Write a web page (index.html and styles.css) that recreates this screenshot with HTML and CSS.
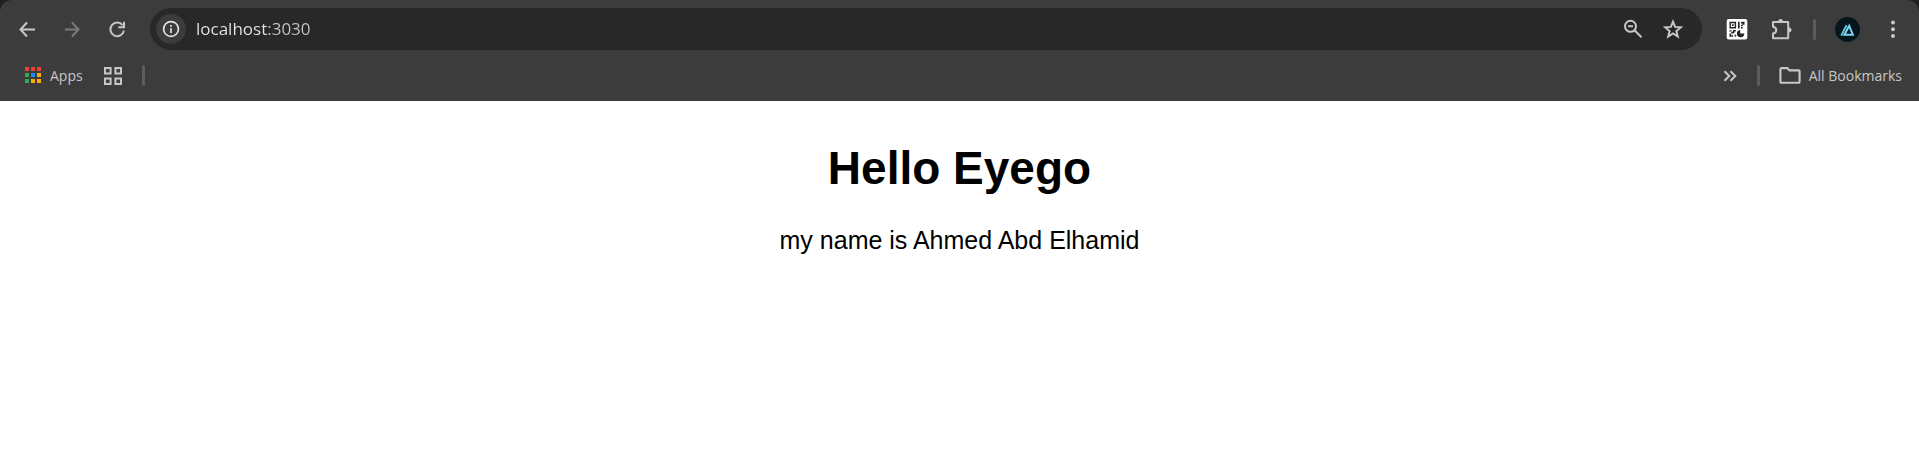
FILE: index.html
```html
<!DOCTYPE html>
<html lang="en">
<head>
<meta charset="utf-8">
<title>Hello Eyego</title>
<link rel="stylesheet" href="styles.css">
</head>
<body>
<div class="frame">
<header class="chrome">
  <div class="toolbar">
    <nav class="nav">
      <button class="nav-btn" aria-label="Back"><svg class="icon" viewBox="0 0 24 24"><path d="M20 12.5H6M12 5.5L5.5 12.5L12 19.5" class="line"/></svg></button>
      <button class="nav-btn dim" aria-label="Forward"><svg class="icon" viewBox="0 0 24 24"><path d="M5 12.5H19M12 5.5L18.5 12.5L12 19.5" class="line"/></svg></button>
      <button class="nav-btn" aria-label="Reload"><svg class="icon" viewBox="0 0 24 24"><path d="M17.6 8.2A6.8 6.8 0 1 0 18.9 13.6" class="line"/><path d="M19 4.8V10.2H13.3" class="line"/></svg></button>
    </nav>
    <form class="address">
      <button type="button" class="site-info" aria-label="Site information"><svg class="icon" viewBox="0 0 24 24"><circle cx="12" cy="12" r="7.4" class="line thin"/><path d="M12 11.2V16M12 8V9.8" class="line thin"/></svg></button>
      <input class="url" type="text" aria-label="Address" value="localhost:3030" spellcheck="false">
      <button type="button" class="addr-btn" aria-label="Zoom"><svg class="icon" viewBox="0 0 24 24"><circle cx="9.5" cy="9.3" r="5.5" class="line"/><path d="M13.5 13.3L20.5 20.3M7 9.3H12" class="line"/></svg></button>
      <button type="button" class="addr-btn" aria-label="Bookmark this page"><svg class="icon" viewBox="0 0 24 24"><path d="M12 4.6L14.1 9.9L19.8 10.3L15.4 14L16.8 19.6L12 16.5L7.2 19.6L8.6 14L4.2 10.3L9.9 9.9Z" class="line"/></svg></button>
    </form>
    <div class="actions">
      <button class="act" aria-label="QR code"><svg class="icon" viewBox="0 0 24 24">
        <rect x="1.7" y="2" width="20.6" height="20.6" rx="2" fill="#fff"/>
        <path d="M5.2 5.5h5.2v5.2h-5.2z" fill="none" stroke="#222" stroke-width="1.4"/>
        <path d="M7 7.3h1.7v1.7H7zM13 4.8h1.6v6.6H13zM16 5h1.6v1.5H16zM17.5 4.8h2v3h-2zM16 7.8h1.6v1.5H16zM16 10h1.6v1.4H16zM4.5 13.2h2v1.4h-2zM8 13h2.8v1.6H9.4v1.6H8zM6.3 14.8h1.7v1.6H6.3zM4.5 16.5h1.6v3.3H4.5zM6.3 18.3h1.8v1.5H6.3zM9.6 17.8h1.6v1.8H9.6z" fill="#222"/>
        <path d="M15.2 12.9v3.7h4.1a3.7 3.7 0 1 1-4.1-3.7z" fill="#222"/></svg></button>
      <button class="act" aria-label="Extensions"><svg class="icon" viewBox="0 0 24 24"><path d="M3 5H18.2V21.2H3V16.6C7.4 15.6 7.4 10.6 3 9.8Z" class="line" stroke-linejoin="round"/><path d="M8 4.8C8 1.2 13.2 1.2 13.2 4.8ZM18.5 10.2C22.6 10.6 22.6 15.2 18.5 15.6Z" fill="currentColor"/></svg></button>
      <span class="divider"></span>
      <button class="act" aria-label="Profile"><svg class="avatar" viewBox="0 0 25 25"><circle cx="12.5" cy="12.5" r="12.5" fill="#06161d"/><path d="M6.2 18.6L11.6 8.2" fill="none" stroke="#5dc5ea" stroke-width="2"/><path d="M14.2 8.8L17.8 17.7H9.4Z" fill="none" stroke="#7fd6f3" stroke-width="2"/></svg></button>
      <button class="act" aria-label="Menu"><svg class="icon" viewBox="0 0 24 24" fill="currentColor"><circle cx="12" cy="5.5" r="2"/><circle cx="12" cy="12.2" r="2"/><circle cx="12" cy="19" r="2"/></svg></button>
    </div>
  </div>
  <div class="bookmarks">
    <button class="bm"><svg class="apps" viewBox="0 0 17 17"><path fill="#ea4335" d="M0 0h4v4H0zM6 0h4v4H6zM12 0h4v4h-4z"/><path fill="#34a853" d="M0 6h4v4H0zM0 12h4v4H0z"/><path fill="#1a8cff" d="M6 6h4v4H6z"/><path fill="#fbae07" d="M12 6h4v4h-4zM6 12h4v4H6zM12 12h4v4h-4z"/></svg>Apps</button>
    <button class="bm" aria-label="Tab groups"><svg class="groups" viewBox="0 0 18 18"><path d="M1 1h5.6v5.6H1zM11.4 1H17v5.6h-5.6zM1 11.4h5.6V17H1zM11.4 11.4H17V17h-5.6z" class="line"/></svg></button>
    <span class="divider"></span>
    <span class="spacer"></span>
    <button class="bm" aria-label="More bookmarks"><svg class="more" viewBox="0 0 14 12"><path d="M1.5 1.2L6.3 6L1.5 10.8M7.5 1.2L12.3 6L7.5 10.8" class="line"/></svg></button>
    <span class="divider"></span>
    <button class="bm"><svg class="folder" viewBox="0 0 20 16"><path d="M1.5 1H7.5L9.5 3.2H18.5Q19 3.2 19 4V14Q19 14.8 18.2 14.8H1.8Q1 14.8 1 14V1.8Q1 1 1.8 1Z" class="line"/></svg>All Bookmarks</button>
  </div>
</header>
</div>
<main class="page">
  <h1>Hello Eyego</h1>
  <p>my name is Ahmed Abd Elhamid</p>
</main>
</body>
</html>
```
FILE: styles.css
```css
* { box-sizing: border-box; }
body { margin: 0; background: #fff; font-family: "Liberation Sans", Arial, sans-serif; color: #000; }
button { border: 0; padding: 0; background: none; color: inherit; font: inherit; display: flex; align-items: center; justify-content: center; }
svg { display: block; flex: none; }
.line { fill: none; stroke: currentColor; stroke-width: 2; }
.thin { stroke-width: 1.7; }
.icon { width: 24px; height: 24px; }

.frame { background: #202020; }
.chrome { background: #3c3c3c; color: #c7c7c7; border-radius: 12px 12px 0 0; font-family: "Open Sans", "Noto Sans", sans-serif; font-size: 14px; }
.toolbar { display: flex; align-items: center; padding: 8px 4px 0; }
.nav { display: flex; margin-right: 11px; }
.nav-btn { width: 45px; height: 42px; }
.dim { color: #7b7b7b; }

.address { flex: 1; display: flex; align-items: center; height: 42px; padding: 0 9px 0 6px; border-radius: 21px; background: #282828; }
.site-info { width: 30px; height: 30px; border-radius: 50%; background: #3c3c3c; color: #e3e3e3; }
.url { flex: 1; min-width: 0; margin: 0 0 0 10px; padding: 0; border: 0; outline: 0; font-family: "Open Sans", "Noto Sans", sans-serif; font-size: 17px; line-height: 24px; color: transparent; background: linear-gradient(90deg, #e8e8e8 73px, #c7c7c7 73px); -webkit-background-clip: text; background-clip: text; }
.addr-btn { width: 40px; height: 42px; }

.actions { display: flex; align-items: center; padding-left: 12px; }
.act { width: 45px; height: 42px; }
.avatar { width: 25px; height: 25px; }
.divider { width: 3px; height: 21px; border-radius: 2px; background: #5c5c5c; }
.actions .divider { margin: 0 9px; }

.bookmarks { display: flex; align-items: center; height: 51px; padding: 0 17px 0 25px; }
.bm { height: 30px; gap: 8px; line-height: 20px; }
.apps { width: 17px; height: 17px; }
.groups { width: 18px; height: 18px; }
.more { width: 14px; height: 12px; }
.folder { width: 22px; height: 17px; }
.bm + .bm { margin-left: 21px; }
.bm + .divider { margin-left: 20px; }
.spacer { flex: 1; }
.divider + .bm { margin-left: 19px; }

.page { padding: 41px 8px; text-align: center; }
h1 { margin: 0 0 31px; font-size: 46px; line-height: 52px; }
p { margin: 0; font-size: 25px; line-height: 30px; }
```
